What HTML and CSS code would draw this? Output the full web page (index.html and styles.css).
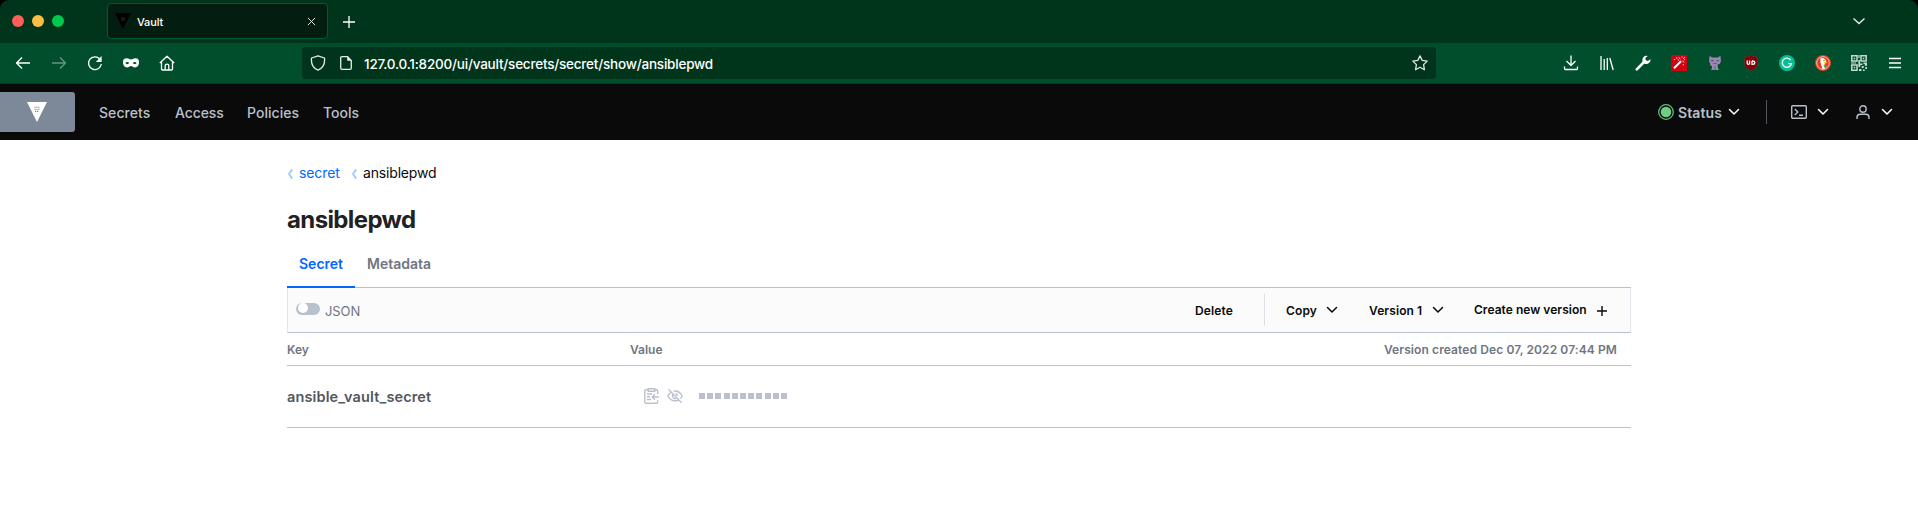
FILE: index.html
```
<!DOCTYPE html>
<html lang="en">
<head>
<meta charset="utf-8">
<title>Vault</title>
<link rel="stylesheet" href="styles.css">
</head>
<body>
<svg class="defs" aria-hidden="true">
  <symbol id="chev" viewBox="0 0 12 12"><path d="M1.5 3.500 6 8l4.500-4.500" fill="none" stroke="currentColor" stroke-width="1.500" stroke-linecap="round" stroke-linejoin="round"/></symbol>
  <symbol id="crumb" viewBox="0 0 6 10"><path d="M5.200.4 2 5l3.200 4.600" fill="none" stroke="currentColor" stroke-width="2"/></symbol>
</svg>
<div class="browser">
  <div class="tabstrip">
    <div class="lights"><i class="red"></i><i class="yellow"></i><i class="green"></i></div>
    <div class="tab">
      <svg class="favicon" viewBox="0 0 16 16"><path d="M0 0h16L8 16z" fill="#000"/><path d="M6 4h4v4H6z" fill="#161616"/></svg>
      <span class="tab-title">Vault</span>
      <svg class="close" viewBox="0 0 10 10"><path d="M1 1l8 8M9 1 1 9" stroke="#e4ebe7" stroke-width="1.100"/></svg>
    </div>
    <svg class="newtab" viewBox="0 0 12 12"><path d="M6 0v12M0 6h12" stroke="#fff" stroke-width="1.300"/></svg>
    <svg class="alltabs" viewBox="0 0 12 8"><path d="M.5 1.500 6 6.500l5.500-5" fill="none" stroke="#e8eeea" stroke-width="1.400"/></svg>
  </div>
  <div class="toolbar">
    <div class="icons">
      <svg viewBox="0 0 16 16"><path d="M15 8H1.500M7 2.500 1.500 8 7 13.500" class="w"/></svg>
      <svg viewBox="0 0 16 16" class="dim"><path d="M1 8h13.500M9 2.500 14.500 8 9 13.500" class="w"/></svg>
      <svg viewBox="0 0 16 16"><path d="M12.800 4A6.400 6.400 0 1 0 14.300 9" class="w"/><path d="M14.600 1v6H8.800z" fill="#fff"/></svg>
      <svg viewBox="0 0 16 16"><path fill="#fff" fill-rule="evenodd" d="M3.500 3.300C5.500 3.300 6.400 4.500 8 4.500s2.500-1.200 4.500-1.200c2.300 0 3.500 1.400 3.500 4 0 3-1.600 5.200-4 5.200-1.900 0-2.600-1.600-4-1.600s-2.100 1.600-4 1.600c-2.400 0-4-2.200-4-5.200 0-2.600 1.200-4 3.500-4zM2.300 8c.8 1.500 3 1.500 4 0-1-1.500-3.200-1.500-4 0zm7.400 0c1 1.500 3.200 1.500 4 0-.8-1.500-3-1.500-4 0z"/></svg>
      <svg viewBox="0 0 16 16"><path d="M.8 8 8 1.200 15.200 8M2.500 6.800v7.200q0 1 1 1h9q1 0 1-1V6.800M6.200 15v-4.500q0-1.300 1.800-1.300t1.800 1.300V15" class="w"/></svg>
    </div>
    <div class="urlbar">
      <svg class="shield" viewBox="0 0 16 16"><path d="M8 .8 14.500 3c.6 5.500-1.700 10-6.500 12.200C3.200 13 .9 8.500 1.500 3z" fill="none" stroke="#e6ede9" stroke-width="1.300" stroke-linejoin="round"/></svg>
      <svg class="file" viewBox="0 0 12 14"><path d="M7.500.7H2Q.7.700.7 2v10Q.7 13.300 2 13.300h8q1.300 0 1.300-1.300V4.500z" fill="none" stroke="#e6ede9" stroke-width="1.300"/><path d="M7.200.5v4.300h4.300z" fill="#e6ede9"/></svg>
      <span class="url">127.0.0.1:8200/ui/vault/secrets/secret/show/ansiblepwd</span>
      <svg class="star" viewBox="0 0 16 16"><path d="M8 .9 10.200 5.400 15.200 6.100 11.600 9.600 12.400 14.700 8 12.300 3.600 14.700 4.400 9.600.8 6.100 5.800 5.400z" fill="none" stroke="#dfe8e3" stroke-width="1.300" stroke-linejoin="round"/></svg>
    </div>
    <div class="icons ext">
      <svg viewBox="0 0 16 16"><path d="M8 .5v10M3.500 6 8 10.500 12.500 6M1.500 11.500v2q0 1 1 1h11q1 0 1-1v-2" class="w"/></svg>
      <svg viewBox="0 0 16 16"><path d="M2 1v14M5.200 4v11M8.300 3v12M10.800 3l3.400 12" class="w"/></svg>
      <svg viewBox="0 0 16 16"><path d="M1.800 14.300 9 7" stroke="#fff" stroke-width="2.600" stroke-linecap="round"/><path d="M12.800 1.100A4.300 4.300 0 0 0 7.500 6.800a4.300 4.300 0 0 0 8-2.600L12.700 6 10.600 5 10.500 2.800z" fill="#fff"/></svg>
      <svg viewBox="0 0 16 16"><path d="M0 0h16v16H0z" fill="#d70012"/><path d="M3 13.200 10 6.300" stroke="#fff" stroke-width="1.900"/><path d="M11.200 5.500 13 7.500M9.500 4.200 7.700 2.400M5 3h1.400M3 4.500h1.200M12 3.800l2-1.800M10.500 2h1M13 4.700h1M6.800 5h1.400M12.300 9v1.200" stroke="#fff" stroke-width="1" opacity=".85"/></svg>
      <svg viewBox="0 0 16 16"><path d="M2.500.8 5.200 2.500h5.600L13.500.8l.4 5.600q-.4 2.800-3.300 3.200l.4 3.400 1 2H4l1-2v-1.800L3 10l.2-1 2.100.5Q2.500 9 2.100 6.400z" fill="#9688b2"/><path d="M4.400 5.600h1.800M9.800 5.600h1.800" stroke="#4f466b" stroke-width="1.300"/><path d="M6 8.500h4M8 11v4" stroke="#63587f" stroke-width=".8"/></svg>
      <svg viewBox="0 0 16 16"><path d="M8 .3q2.800 1.800 6.500 1.700v6.500q0 4.200-6.500 7.200-6.500-3-6.500-7.200V2Q5.200 2.100 8 .3z" fill="#850009" stroke="#6d3930" stroke-width=".5"/><path d="M4.200 5.500v2.800q0 1.100 1.200 1.100t1.200-1.100V5.500M9 6.100v3.300h.8q2-.1 2-1.700t-2-1.700H9" fill="none" stroke="#fff" stroke-width="1.300"/></svg>
      <svg viewBox="0 0 16 16"><circle cx="8" cy="8" r="8" fill="#08bd93"/><path d="M11.700 5.100A4.600 4.600 0 1 0 12.400 8.600H9" fill="none" stroke="#e6fbf4" stroke-width="1.400"/></svg>
      <svg viewBox="0 0 16 16"><circle cx="8" cy="8" r="8" fill="#e23d20"/><circle cx="8" cy="8" r="6.300" fill="none" stroke="#f8c7ba" stroke-width="1"/><path d="M5.500 3.300q3-1.300 5 1.400.8 1.200.3 3L9.400 9.500l.6 4.500-2.500.1L5.300 7z" fill="#fff"/><path d="M8.700 7h3.400v1.300H9z" fill="#f5b51f"/><path d="m8.500 10 3.300.5-.6 2.500-2.200-.7z" fill="#5cac45"/><circle cx="9" cy="5.500" r=".6" fill="#2d3e6e"/></svg>
      <svg viewBox="0 0 16 16"><path d="M.8.8h5.200v5.200H.8zM10 .8h5.200v5.200H10zM.8 10h5.200v5.200H.8z" fill="none" stroke="#c8dacf" stroke-width="1.500"/><path d="M2.700 2.700h1.500v1.500H2.700zM11.800 2.700h1.500v1.500h-1.500zM2.700 11.800h1.500v1.500H2.700zM7.400 0h1.200v3H7.400zM7.400 5H9v3.500h2.500V10H9.200v2H7.400zM0 7.400h5v1.200H0zM12.500 7.400H16v3.300h-2.200V9h-1.300zM10.700 11h2v2h-2zM8 14h2.500v2H8zM12 14.500h1.700V16H12zM14.300 12H16v2h-1.700z" fill="#c8dacf"/></svg>
      <svg viewBox="0 0 16 16"><path d="M2 3.500h12M2 8h12M2 12.500h12" class="w"/></svg>
    </div>
  </div>
</div>
<nav class="vault-nav">
  <a class="logo"><svg viewBox="0 0 20 20"><path d="M0 0h20L10 20z" fill="#fff"/><path d="M7.500 5.200h5M7.500 7.300h5M8 9.400h4" stroke="#7d8998" stroke-width="1.100" stroke-dasharray="1.200 .7"/></svg></a>
  <a class="n1">Secrets</a><a class="n2">Access</a><a class="n3">Policies</a><a class="n4">Tools</a>
  <div class="nav-right">
    <svg class="dot" viewBox="0 0 16 16"><circle cx="8" cy="8" r="7.300" fill="none" stroke="#5cc177" stroke-width="1.300"/><circle cx="8" cy="8" r="5.300" fill="#70cd86"/></svg>
    <span class="status">Status</span>
    <svg class="chev"><use href="#chev"/></svg>
    <i class="sep"></i>
    <svg class="term" viewBox="0 0 16 14"><rect x=".7" y=".7" width="14.600" height="12.600" rx="1" fill="none" stroke="#bac1cc" stroke-width="1.400"/><path d="m3.800 4 3 3-3 3M8 10.300h4" fill="none" stroke="#bac1cc" stroke-width="1.400"/></svg>
    <svg class="chev c2"><use href="#chev"/></svg>
    <svg class="user" viewBox="0 0 14 14"><circle cx="7" cy="4" r="3.200" fill="none" stroke="#bac1cc" stroke-width="1.400"/><path d="M1 14v-1.500Q1 9.300 4 9.300h6q3 0 3 3.200V14" fill="none" stroke="#bac1cc" stroke-width="1.400"/></svg>
    <svg class="chev c3"><use href="#chev"/></svg>
  </div>
</nav>
<main>
  <div class="crumbs">
    <svg><use href="#crumb"/></svg><a>secret</a>
    <svg><use href="#crumb"/></svg><span>ansiblepwd</span>
  </div>
  <h1>ansiblepwd</h1>
  <div class="tabs"><a class="active">Secret</a><a>Metadata</a></div>
  <div class="actions">
    <i class="toggle"></i><span class="json">JSON</span>
    <span class="delete">Delete</span>
    <i class="divider"></i>
    <span class="copy">Copy</span><svg class="chev"><use href="#chev"/></svg>
    <span class="version">Version 1</span><svg class="chev"><use href="#chev"/></svg>
    <span class="create">Create new version</span>
    <svg class="plus" viewBox="0 0 10 10"><path d="M5 0v10M0 5h10" stroke="#0a0a0a" stroke-width="1.400"/></svg>
  </div>
  <div class="head"><span class="key">Key</span><span>Value</span><span class="created">Version created Dec 07, 2022 07:44 PM</span></div>
  <div class="row">
    <span class="name">ansible_vault_secret</span>
    <svg class="clip" viewBox="0 0 15 16"><path d="M4 1.800H2Q.8 1.800.8 3v11q0 1.200 1.200 1.200h10.500q1.200 0 1.200-1.200v-1.800M11 1.800h1.500q1.200 0 1.200 1.200v3M4.200.8h6.500v2.400H4.200zM3 6h5M3 8.700h3M3 11.500h4M14.800 9H8.500M11 6.300 8.300 9l2.700 2.700" fill="none" stroke="#bac1cc" stroke-width="1.400"/></svg>
    <svg class="eye" viewBox="0 0 16 16"><path d="M4.500 3.800Q2 5.300.8 8q2.700 5 7.200 5 2 0 3.500-.9M6.500 3.100q5.800-.8 8.700 4.900-.8 1.500-1.800 2.500M5.900 6.500q-1 1.700.2 3.200 1.300 1.300 3 .7M8.500 5.500q2 .5 2 2.500M1.500 1.200l13 13.600" fill="none" stroke="#bac1cc" stroke-width="1.400"/></svg>
    <div class="mask"><i></i><i></i><i></i><i></i><i></i><i></i><i></i><i></i><i></i><i></i><i></i></div>
  </div>
</main>
</body>
</html>
```

FILE: styles.css
```
* { box-sizing: border-box; }
body { margin: 0; background: #fff; font-family: Inter, "Open Sans", sans-serif; font-size: 14px; line-height: 20px; white-space: nowrap; overflow: hidden; }
svg, i { display: block; flex: none; }
a, span { flex: none; }
.defs { position: absolute; width: 0; height: 0; }

.browser { background: #000; }
.tabstrip { display: flex; align-items: center; height: 43px; padding: 0 53px 0 12px; background: #00351c; border-radius: 9px 9px 0 0; }
.lights { display: flex; gap: 8px; margin: -1px 43px 0 0; }
.lights i { width: 12px; height: 12px; border-radius: 50%; }
.red { background: #ff5e5a; }
.yellow { background: #ffbd44; }
.green { background: #00ca4e; }
.tab { display: flex; align-items: center; width: 221px; height: 36px; padding: 0 11px 0 7px; margin-top: -1px; background: #031e11; border: 1px solid #005a31; border-radius: 4px; }
.favicon { width: 16px; height: 16px; }
.tab-title { margin: 2px 0 0 6px; color: #fff; font-size: 11px; font-weight: 500; letter-spacing: -.1px; }
.close { width: 9px; height: 9px; margin-left: auto; }
.newtab { width: 12px; height: 12px; margin-left: 15px; }
.alltabs { width: 12px; height: 8px; margin: -2px 0 0 auto; }

.toolbar { display: flex; align-items: center; height: 41px; padding: 0 15px; background: #004e2b; border-bottom: 1px solid #003d20; }
.icons { display: flex; gap: 20px; }
.icons svg { width: 16px; height: 16px; }
.w { fill: none; stroke: #fff; stroke-width: 1.3; stroke-linejoin: round; }
.dim { opacity: .4; }
.urlbar { display: flex; align-items: center; width: 1134px; height: 32px; margin-left: 127px; padding: 0 8px 0 8px; background: #00351c; border-radius: 4px; }
.shield { width: 16px; height: 16px; }
.file { width: 12px; height: 14px; margin-left: 14px; }
.url { margin: 2px 0 0 12px; color: #fff; font-size: 13.5px; font-weight: 500; letter-spacing: -.21px; }
.star { width: 16px; height: 16px; margin-left: auto; }
.ext { margin-left: auto; }

.vault-nav { display: flex; align-items: center; height: 56px; background: #0a0a0a; color: #bac1cc; font-weight: 500; }
.logo { display: flex; align-items: center; width: 75px; height: 40px; padding-left: 27px; background: #7d8998; border-radius: 0 3px 3px 0; }
.logo svg { width: 20px; height: 20px; }
.n1 { width: 76px; margin-left: 24px; letter-spacing: .08px; }
.n2 { width: 72px; letter-spacing: -.1px; }
.n3 { width: 76px; letter-spacing: .05px; }
.n1, .n2, .n3, .n4 { padding-top: 2px; }
.nav-right { display: flex; align-items: center; margin-left: auto; padding-right: 25px; }
.chev { width: 12px; height: 12px; color: #fff; }
.dot { width: 16px; height: 16px; }
.status { width: 50px; margin-left: 4px; padding-top: 2px; font-weight: 600; letter-spacing: .1px; }
.sep { width: 1px; height: 24px; margin: 0 24px 0 26px; background: #525761; }
.term { width: 16px; height: 14px; }
.c2 { margin-left: 10px; }
.user { width: 14px; height: 14px; margin-left: 27px; }
.c3 { margin-left: 11px; }

main { width: 1344px; margin: 0 auto; padding-top: 22px; }
.crumbs { display: flex; align-items: center; height: 22px; }
.crumbs svg { width: 6px; height: 10px; margin-top: 2px; color: #a8caff; }
.crumbs a { width: 52px; margin-left: 6px; color: #0068ff; letter-spacing: -.1px; }
.crumbs span { margin-left: 6px; color: #0a0a0a; letter-spacing: -.17px; }
h1 { margin: 20px 0 0; color: #1f2124; font-size: 24px; font-weight: 700; line-height: 32px; letter-spacing: -.62px; }
.tabs { display: flex; height: 52px; border-bottom: 1px solid #b8c2cc; }
.tabs a { height: 52px; padding: 18px 12px 0; color: #6f7682; font-weight: 600; }
.tabs .active { width: 68px; color: #0068ff; border-bottom: 2px solid #0068ff; }
.actions { display: flex; align-items: center; height: 45px; background: #fbfbfb; border: solid #e3e7ed; border-width: 0 1px; border-bottom: 1px solid #b8c2cc; padding: 0 23px 0 8px; color: #0a0a0a; font-size: 12px; font-weight: 600; }
.toggle { width: 24px; height: 12px; margin-top: -2px; padding: 0 2px; border-radius: 6px; background: #b8c2cc; }
.toggle::before { content: ""; display: block; width: 10px; height: 10px; border-radius: 50%; background: #fff; }
.json { margin-left: 5px; padding-top: 1px; color: #6f7682; font-size: 13px; font-weight: 400; letter-spacing: -.1px; }
.actions .chev { color: #0a0a0a; }
.delete { width: 69px; margin-left: auto; padding-top: 1px; letter-spacing: .12px; }
.divider { width: 1px; height: 32px; margin-right: 21px; background: #dce0e6; }
.copy { width: 40px; padding-top: 1px; letter-spacing: .15px; }
.version { width: 63px; margin-left: 31px; padding-top: 1px; letter-spacing: .1px; }
.create { width: 123px; margin-left: 30px; letter-spacing: .03px; }
.plus { width: 10px; height: 10px; margin-top: 1px; }
.head { display: flex; align-items: center; height: 33px; padding: 2px 14px 0 0; border-bottom: 1px solid #b8c2cc; color: #6f7682; font-size: 12px; font-weight: 600; }
.key { width: 343px; }
.created { margin-left: auto; letter-spacing: .1px; }
.row { display: flex; align-items: center; height: 62px; padding-bottom: 1px; border-bottom: 1px solid #b8c2cc; }
.name { width: 357px; padding-top: 1px; color: #525761; font-weight: 600; font-size: 14.5px; letter-spacing: .13px; }
.clip { width: 15px; height: 16px; }
.eye { width: 16px; height: 16px; margin-left: 8px; }
.mask { display: flex; gap: 2.2px; margin-left: 16px; }
.mask i { width: 6px; height: 6px; background: #bac1cc; }
```
